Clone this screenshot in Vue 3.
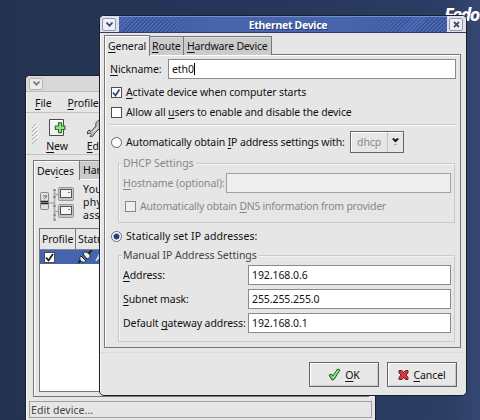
<script setup>
import { ref } from 'vue'

const nickname = ref('eth0')
const rows = ref([
  { key: 'A', before: '', after: 'ddress:', value: '192.168.0.6', cls: 'address' },
  { key: 'S', before: '', after: 'ubnet mask:', value: '255.255.255.0', cls: 'subnet' },
  { key: 'g', before: 'Default ', after: 'ateway address:', value: '192.168.0.1', cls: 'gateway' },
])
</script>

<template>
  <div class="desktop">
    <div class="brand">Fedo</div>

    <section class="window main-window">
      <header class="titlebar idle">
        <span class="wm-button dim">
          <svg width="9" height="7" viewBox="0 0 9 7"><path d="M1.5 1.5 4.5 4.7 7.5 1.5" fill="none" stroke="#777" stroke-width="1.8" /></svg>
        </span>
      </header>
      <nav class="menubar"><span><u>F</u>ile</span><span class="m-profile"><u>P</u>rofile</span></nav>
      <div class="toolbar">
        <svg class="grip" width="7" height="21" viewBox="0 0 7 21">
          <path d="M1 4 5 0M1 8 6 3M1 12 6 7M1 16 6 11M1 20 6 15" stroke="#aaa" fill="none" />
          <path d="M2 5 6 1M2 9 7 4M2 13 7 8M2 17 7 12" stroke="#fff" fill="none" />
        </svg>
        <div class="tool tool-new">
          <svg width="20" height="20" viewBox="0 0 20 20">
            <path d="M2.5 1.5H16.5V17.5H2.5Z" fill="#f3f3f3" stroke="#4b4b4b" />
            <path d="M3.5 2.5H15.5" stroke="#fff" />
            <path d="M11.5 4.8H14.5V8H17.8V11.5H14.5V14.7H11.5V11.5H8.3V8H11.5Z" fill="#97e08b" stroke="#237a2a" stroke-width="1.2" />
          </svg>
          <span><u>N</u>ew</span>
        </div>
        <div class="tool tool-edit">
          <svg width="20" height="20" viewBox="0 0 20 20">
            <path d="M1.5 13.5 3 12 5 13.5 10 8C9 5 11 2 15 2L13 5 15 7 19 5C19 9 16 11 13 11L8 16C8 18 6 19 4 18.5L5.5 16.5 4 15 1.5 16Z" fill="#bdbdbd" stroke="#444" />
            <path d="M7 14 12 8.5" stroke="#eee" />
          </svg>
          <span><u>E</u>dit</span>
        </div>
      </div>
      <div class="main-tabs">
        <span class="tab active">Dev<u>i</u>ces</span><span class="tab">Hardware</span>
      </div>
      <div class="main-panel">
        <div class="intro">
          <svg width="34" height="36" viewBox="0 0 34 36">
            <path d="M14.5 3V34M8 17H14M14 8.5H20M14 25.5H20" stroke="#aaa" stroke-width="1.6" fill="none" />
            <path d="M13 4h3M13 11h3M13 20h3M13 29h3M13 34h3" stroke="#666" />
            <rect x="0.5" y="6.5" width="8" height="17" rx="1" fill="#ddd" stroke="#888" />
            <path d="M1 15.5H8M1 17.5H8" stroke="#222" stroke-width="1.4" />
            <path d="M3 10H7L4 13" stroke="#666" fill="none" />
            <rect x="18.5" y="1.5" width="15" height="13" rx="1" fill="#c4c4c4" stroke="#999" />
            <rect x="20.5" y="3.5" width="11" height="8" fill="#f4f4f4" stroke="#555" />
            <rect x="18.5" y="18.5" width="15" height="13" rx="1" fill="#c4c4c4" stroke="#999" />
            <rect x="20.5" y="20.5" width="11" height="8" fill="#f4f4f4" stroke="#555" />
            <path d="M28 6.5h2M28 23.5h2" stroke="#777" />
          </svg>
          <p>You<br />phy<br />ass</p>
        </div>
        <div class="list">
          <div class="list-head"><span class="col-profile">Profile</span><span class="col-status">Status</span></div>
          <div class="list-row">
            <span class="check small">
              <svg width="9" height="9" viewBox="0 0 9 9"><path d="M1 4.5 3.5 7.5 8 1" fill="none" stroke="#111" stroke-width="1.6" /></svg>
            </span>
            <svg class="plug" width="14" height="14" viewBox="0 0 14 14">
              <path d="M0 13 4 9M10 4 14 0" stroke="#222" stroke-width="2" />
              <path d="M3 6 8 11C6 13 4 12 3 11S1 8 3 6ZM5 4C7 1 9 2 11 4S12 8 9 9Z" fill="#eee" stroke="#222" />
            </svg>
            <em>Active</em>
          </div>
        </div>
      </div>
      <footer class="statusbar">Edit device...</footer>
    </section>

    <section class="window dialog">
      <header class="titlebar">
        <span class="wm-button">
          <svg width="9" height="7" viewBox="0 0 9 7"><path d="M1.5 1.5 4.5 4.7 7.5 1.5" fill="none" stroke="#3c4668" stroke-width="1.8" /></svg>
        </span>
        <h1><span>Ethernet Device</span></h1>
        <span class="wm-button close">
          <svg width="7" height="7" viewBox="0 0 7 7"><path d="M1 1 6 6M6 1 1 6" stroke="#4a4f62" stroke-width="1.8" /></svg>
        </span>
      </header>
      <div class="tabs">
        <span class="tab active"><b class="t-general"><u>G</u>eneral</b></span><span class="tab route"><b class="t-route"><u>R</u>oute</b></span><span class="tab hardware"><b class="t-hardware"><u>H</u>ardware Device</b></span>
      </div>
      <div class="panel">
        <div class="nick-row">
          <label><u>N</u>ickname:</label>
          <div class="entry">{{ nickname }}<i class="caret"></i></div>
        </div>
        <div class="option first">
          <span class="check">
            <svg width="9" height="9" viewBox="0 0 9 9"><path d="M1 4.5 3.5 7.5 7.5 1.5" fill="none" stroke="#34477f" stroke-width="1.8" /></svg>
          </span>
          <span class="t-activate"><u>A</u>ctivate device when computer starts</span>
        </div>
        <div class="option second">
          <span class="check"></span>
          <span class="t-allow">Allow all <u>u</u>sers to enable and disable the device</span>
        </div>
        <hr />
        <div class="auto-row">
          <span class="radio"></span>
          <span class="t-auto">Automatically obtain <u>I</u>P address settings with:</span>
          <div class="combo">
            <span>dhcp</span>
            <i><svg width="7" height="8" viewBox="0 0 7 8"><path d="M0 1 1.5 0 3.5 1.2 5.5 0 7 1 3.5 4.5Z" fill="#222" /><path d="M2 6.5H5" stroke="#aaa" /></svg></i>
          </div>
        </div>
        <fieldset class="dhcp">
          <legend>DHCP Settings</legend>
          <div class="host-row"><label><u>H</u>ostname (optional):</label><div class="entry off"></div></div>
          <div class="dns-row"><span class="check off"></span><span class="t-dns">Automatically obtain <u>D</u>NS information from provider</span></div>
        </fieldset>
        <div class="option static">
          <span class="radio on"></span>
          <span class="t-static">Statically set IP addresses:</span>
        </div>
        <fieldset class="manual">
          <legend>Manual IP Address Settings</legend>
          <div v-for="r in rows" :key="r.key" class="addr-row">
            <label><span :class="r.cls">{{ r.before }}<u>{{ r.key }}</u>{{ r.after }}</span></label>
            <div class="entry">{{ r.value }}</div>
          </div>
        </fieldset>
      </div>
      <div class="actions">
        <button>
          <svg width="13" height="13" viewBox="0 0 13 13"><path d="M1 7 3.5 6 5 8 9.5 1 12 2 6 11.5 4 12Z" fill="#6fce66" stroke="#1d6326" /><path d="M5 10 10 2.5" stroke="#c0f0b8" /></svg>
          <span><u>O</u>K</span>
        </button>
        <button class="cancel">
          <svg width="11" height="12" viewBox="0 0 11 12"><path d="M1 1.5H4L5.5 3.5 7.5 1.5H10V4L8 6 10 8.5V10.5H7.5L5.5 8.5 4 10.5H1V8.5L3 6 1 4Z" fill="#d23a40" stroke="#721b20" /></svg>
          <span><u>C</u>ancel</span>
        </button>
      </div>
    </section>
  </div>
</template>

<style>
body { margin: 0; overflow: hidden; }
</style>

<style scoped>
* { box-sizing: border-box; }
.desktop {
  position: relative; width: 480px; height: 420px; overflow: hidden;
  background: linear-gradient(90deg, #253351 0%, #26365a 55%, #2c3d63 92%, #344771 100%);
  font: 10.5px/14px "Noto Sans", "Open Sans", sans-serif; letter-spacing: -0.08px; color: #111; white-space: nowrap;
}
u { text-decoration: underline; text-underline-offset: 2px; text-decoration-thickness: 1px; text-decoration-skip-ink: none; }
.brand { position: absolute; left: 444px; top: 4px; font: italic bold 18px/20px "Open Sans", sans-serif; color: #fff; letter-spacing: -1.5px; }
.window { position: absolute; isolation: isolate; display: flex; flex-direction: column; background: #e6e6e6; border: 1px solid #1b1f2b; box-shadow: inset 1px 1px #f8f8f8; }
.main-window { left: 25px; top: 75px; width: 351px; height: 347px; border-radius: 5px 5px 0 0; }
.dialog { left: 99px; top: 15px; width: 368px; height: 381px; border-radius: 5px; }

.titlebar { display: flex; align-items: center; height: 17px; flex: none; background: #dfe1e8; border-bottom: 1px solid #303c60; border-radius: 4px 4px 0 0; }
.titlebar.idle { background: #d8d8d8; border-bottom: 1px solid #bbb; height: 16px; padding-left: 1px; }
.wm-button { display: flex; align-items: center; justify-content: center; width: 14px; height: 13px; margin: 0 3px 0 2px; border: 1px solid #8e98b4; border-radius: 2px; background: #eef0f6; }
.wm-button.dim { border-color: #b5b5b5; background: #ececec; height: 12px; }
.wm-button.close { margin: 0 3px 0 2px; }
h1 {
  display: flex; justify-content: center; flex: 1; height: 16px; margin: 0;
  font-size: 10.5px; line-height: 16px; font-weight: 700; color: #fff; text-shadow: 1px 1px #26386f;
  border-top: 1px solid #7890ca;
  background: linear-gradient(90deg, transparent 12%, #4764ad 32% 68%, transparent 88%), repeating-linear-gradient(135deg, #4b69b4 0 1.5px, #3a5398 1.5px 2.8px);
}
h1 span { letter-spacing: -0.32px; padding-left: 10px; }

.tab { display: flex; align-items: center; height: 19px; border: 1px solid #777; border-bottom: 0; border-left: 0; background: #cbcbcb; box-shadow: inset 0 1px #ddd; }
.tab.active { background: #e6e6e6; border-left: 1px solid #777; box-shadow: inset 1px 1px #fff; height: 21px; margin-bottom: -1px; position: relative; }
.tab b { font-weight: 400; }
.tabs { display: flex; align-items: flex-end; height: 21px; padding-left: 4px; margin-top: 1px; flex: none; z-index: 1; }
.tabs .active { width: 46px; padding-left: 3px; }
.tabs .route { width: 34px; padding-left: 2px; }
.tabs .hardware { width: 88px; padding-left: 3px; }
.t-hardware { letter-spacing: -0.2px; }
.panel { height: 294px; margin: -1px 5px 0 4px; border: 1px solid #777; box-shadow: inset 1px 1px #fff; padding: 4px 4px 0 5px; flex: none; }
.entry { position: relative; height: 20px; border: 1px solid #8a8a8a; background: #fff; padding-left: 3px; line-height: 18px; display: flex; align-items: center; }
.entry.off { background: #eee; border-color: #a0a0a0; }
.caret { width: 1px; height: 12px; background: #000; }
.nick-row { display: flex; align-items: center; }
.nick-row label { width: 58px; }
.nick-row .entry { flex: 1; }
.option { display: flex; align-items: center; gap: 4px; height: 14px; padding-left: 1px; }
.first { margin-top: 6px; }
.second { margin-top: 6px; }
hr { height: 2px; border: 0; margin: 5px 0; border-top: 1px solid #c9c9c9; border-bottom: 1px solid #f8f8f8; }
.check { display: flex; align-items: center; justify-content: center; width: 11px; height: 11px; border: 1px solid #4d4d4d; background: #fff; flex: none; }
.check.off { border-color: #888; background: #eee; }
.radio { width: 11px; height: 11px; border: 1px solid #666; border-radius: 50%; background: #fff; flex: none; }
.radio.on { background: radial-gradient(circle, #2d3f7a 0 2.6px, #fff 3.4px); }
.auto-row { display: flex; align-items: center; gap: 4px; height: 22px; padding-left: 1px; }
.t-auto { width: 220px; letter-spacing: -0.13px; }
.t-activate, .t-allow { letter-spacing: -0.12px; }
.t-static { letter-spacing: 0.08px; }
.t-dns { letter-spacing: -0.24px; }
.combo { display: flex; width: 54px; height: 22px; border: 1px solid #666; box-shadow: inset 1px 1px #fff; color: #888; }
.combo span { width: 37px; padding-left: 6px; line-height: 20px; border-right: 1px solid #c4c4c4; }
.combo i { flex: 1; display: flex; align-items: center; justify-content: center; }
fieldset { margin: 0 1px 0 8px; padding: 0 3px 0 4px; border: 1px solid #cacaca; box-shadow: inset 1px 1px #f4f4f4; min-width: 0; }
legend { padding: 0 2px 0 1px; margin-left: -1px; line-height: 14px; height: 14px; color: #444; background: #e6e6e6; letter-spacing: -0.04px; }
.dhcp { height: 67px; margin-top: 3px; color: #888; }
.dhcp legend { color: #888; }
.host-row { display: flex; align-items: center; margin-top: 3px; }
.host-row label { width: 103px; letter-spacing: -0.1px; }
.host-row .entry { flex: 1; }
.dns-row { display: flex; align-items: center; gap: 4px; padding-left: 2px; margin-top: 6px; }
.static { margin-top: 6px; }
.manual { height: 94px; margin-top: 5px; }
.addr-row { display: flex; align-items: center; margin-top: 4px; }
.manual legend + .addr-row { margin-top: 3px; }
.addr-row label { width: 125px; }
.addr-row .entry { flex: 1; }
.actions { display: flex; justify-content: flex-end; gap: 8px; padding: 9px 9px 0 0; margin-top: 4px; border-top: 1px solid #dcdcdc; }
button { display: flex; align-items: center; justify-content: center; gap: 4px; width: 70px; height: 25px; padding: 0; font: inherit; letter-spacing: inherit; color: #111; background: #e8e8e8; border: 1px solid #666; box-shadow: inset 1px 1px #fff, inset -1px -1px #c8c8c8; }

.menubar { display: flex; align-items: center; height: 21px; padding: 2px 0 0 9px; border-bottom: 1px solid #c2c2c2; flex: none; }
.m-profile { margin-left: 16px; }
.toolbar { display: flex; height: 42px; border-bottom: 1px solid #c2c2c2; padding: 5px 0 0 5px; flex: none; }
.grip { margin-top: 6px; }
.tool { display: flex; flex-direction: column; align-items: center; width: 34px; }
.tool span { line-height: 14px; margin-top: 1px; }
.tool-new { margin-left: 2px; }
.tool-edit { margin-left: 5px; }
.main-tabs { display: flex; align-items: flex-end; padding-left: 7px; height: 24px; flex: none; z-index: 1; }
.main-tabs .active { width: 47px; padding-left: 3px; height: 20px; }
.main-tabs .tab { padding-left: 3px; width: 60px; }
.main-tabs .active.tab { width: 47px; }
.main-panel { display: flex; flex-direction: column; height: 219px; margin: -1px 6px 0 7px; border: 1px solid #777; box-shadow: inset 1px 1px #fff; padding: 5px 5px 4px; flex: none; }
.intro { display: flex; gap: 9px; padding-left: 1px; height: 44px; }
.intro p { margin: -1px 0 0; line-height: 13px; letter-spacing: 0.3px; }
.intro svg { margin-top: 2px; }
.list { flex: 1; border: 1px solid #777; background: #fff; }
.list-head { display: flex; height: 21px; background: #e6e6e6; border-bottom: 1px solid #888; line-height: 20px; }
.col-profile { width: 36px; padding-left: 2px; border-right: 1px solid #777; }
.col-status { padding-left: 2px; }
.list-row { display: flex; align-items: center; height: 14px; background: #4663ae; padding-left: 4px; color: #fff; }
.plug { margin-left: 23px; }
.list-row em { margin-left: 4px; }
.statusbar { height: 17px; margin: 4px 3px 0; border: 1px solid #a0a0a0; padding-left: 1px; line-height: 16px; letter-spacing: 0.08px; color: #444; flex: none; }
</style>
